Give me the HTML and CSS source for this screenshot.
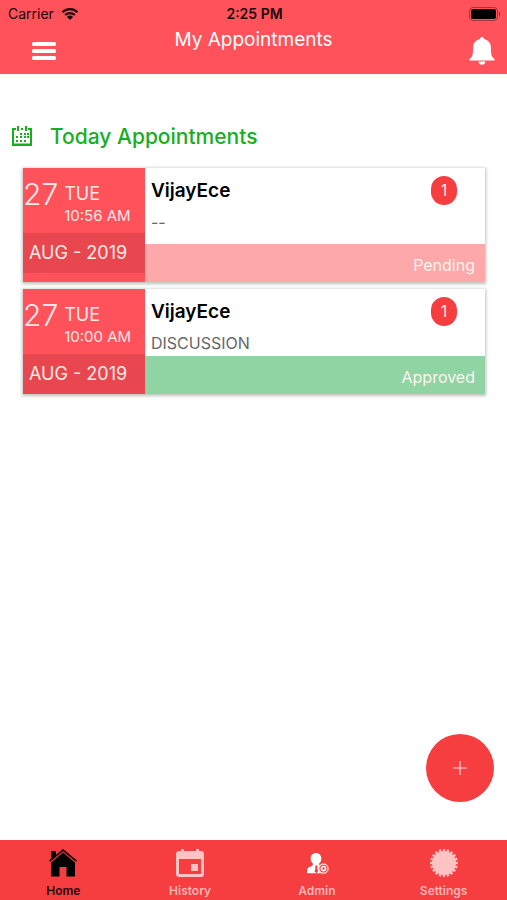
FILE: index.html
```html
<!DOCTYPE html>
<html lang="en">
<head>
  <meta charset="UTF-8">
  <meta name="viewport" content="width=device-width, initial-scale=1">
  <title>My Appointments</title>
  <link rel="stylesheet" href="styles.css">
</head>
<body>

  <header>
    <div class="status-bar">
      <div class="carrier">
        <span>Carrier</span>
        <svg width="18" height="14" viewBox="0 0 18 14">
          <path d="M1.5 5.2a10.8 10.8 0 0 1 15 0M4.2 8a7 7 0 0 1 9.6 0" fill="none" stroke="#1c0507" stroke-width="2.2"/>
          <path d="M5.9 9.9a4.6 4.6 0 0 1 6.2 0L9 13z" fill="#1c0507"/>
        </svg>
      </div>
      <div class="time">2:25 PM</div>
      <div class="battery">
        <svg width="32" height="14" viewBox="0 0 32 14">
          <rect x="0.5" y="0.5" width="28" height="13" rx="3.5" fill="none" stroke="#a8343c"/>
          <rect x="2" y="2" width="25" height="10" rx="2" fill="#000"/>
          <path d="M30 4.5q2 2.5 0 5z" fill="#7a262b"/>
        </svg>
      </div>
    </div>

    <div class="nav-bar">
      <button class="icon-btn menu" aria-label="Menu">
        <svg width="24" height="18" viewBox="0 0 24 18" fill="#fff">
          <rect width="24" height="4" rx="1.5"/>
          <rect y="7" width="24" height="4" rx="1.5"/>
          <rect y="14" width="24" height="4" rx="1.5"/>
        </svg>
      </button>
      <h1>My Appointments</h1>
      <button class="icon-btn bell" aria-label="Notifications">
        <svg width="26" height="30" viewBox="0 0 26 30" fill="#fff">
          <path d="M13 1c1.200 0 2 .8 2 2 4.600 1 7 4.500 7 9.500 0 6 .5 8.500 3.500 10.500v1.500H.5V23C3.500 21 4 18.500 4 12.500 4 7.500 6.400 4 11 3c0-1.200.8-2 2-2z"/>
          <path d="M9.500 25.500h7c-.3 2-1.600 3.300-3.500 3.300s-3.200-1.300-3.500-3.300z"/>
        </svg>
      </button>
    </div>
  </header>

  <main>
    <div class="section-title">
      <svg width="20" height="20" viewBox="0 0 20 20" fill="#17ae1f">
        <path d="M0 2h2v15.500h16V2h2v18H0zM2 2h2v2H2zM16 2h2v2h-2zM9 2h2v2H9z"/>
        <path d="M5 0h2v5H5zM13 0h2v5h-2z"/>
        <path d="M8 7h2v2H8zM12 7h2v2h-2zM15 7h2v2h-2zM4 10h2v2H4zM8 10h2v2H8zM12 10h2v2h-2zM15 10h2v2h-2zM4 14h2v2H4zM8 14h2v2H8zM12 14h2v2h-2z"/>
      </svg>
      <h2>Today Appointments</h2>
    </div>

    <div class="list">
      <div class="card">
        <div class="date">
          <div class="date-top">
            <div class="day">27</div>
            <div>
              <div class="weekday">TUE</div>
              <div class="hour">10:56 AM</div>
            </div>
          </div>
          <div class="month">AUG - 2019</div>
        </div>
        <div class="info">
          <div class="info-top tall">
            <div>
              <h3>VijayEce</h3>
              <p>--</p>
            </div>
            <span class="badge">1</span>
          </div>
          <div class="status pending">Pending</div>
        </div>
      </div>

      <div class="card">
        <div class="date">
          <div class="date-top">
            <div class="day">27</div>
            <div>
              <div class="weekday">TUE</div>
              <div class="hour">10:00 AM</div>
            </div>
          </div>
          <div class="month">AUG - 2019</div>
        </div>
        <div class="info">
          <div class="info-top">
            <div>
              <h3>VijayEce</h3>
              <p>DISCUSSION</p>
            </div>
            <span class="badge">1</span>
          </div>
          <div class="status approved">Approved</div>
        </div>
      </div>
    </div>
  </main>

  <button class="fab" aria-label="Add appointment">
    <svg width="14" height="14" viewBox="0 0 14 14">
      <path d="M7 0v14M0 7h14" stroke="#ffd9d9" stroke-width="1.2"/>
    </svg>
  </button>

  <nav class="tabs">
    <a href="#" class="active">
      <svg width="28" height="28" viewBox="0 0 28 28" fill="#000">
        <path d="M14 0L28 11.500l-1 1.300L14 2.200 1 12.800l-1-1.300 2-1.700V2h5v3.700z"/>
        <path d="M14 3.600L26 13.400V27.500h-8.500V18h-7v9.500H2V13.400z"/>
      </svg>
      <span>Home</span>
    </a>
    <a href="#">
      <svg width="28" height="28" viewBox="0 0 28 28" fill="#ffc3c3">
        <path fill-rule="evenodd" d="M5 0h3v2h12V0h3v2h2a3 3 0 0 1 3 3v20a3 3 0 0 1-3 3H3a3 3 0 0 1-3-3V5a3 3 0 0 1 3-3h2zM3 10v15h22V10z"/>
        <rect x="15" y="15" width="7" height="7"/>
      </svg>
      <span>History</span>
    </a>
    <a href="#">
      <svg width="28" height="28" viewBox="0 0 28 28" fill="#fff">
        <path d="M13 4c3.200 0 5.300 2.300 5.300 5.500 0 2.300-1 4.300-2.300 5.300 0 1.200.8 1.700 2.600 2.200L20 24.300H4c0-4 .5-5.800 3-6.600 2.200-.7 3-1.200 3-2.900-1.400-1-2.300-3-2.300-5.300C7.700 6.300 9.800 4 13 4z"/>
        <path d="M13.300 16l1.200 1.500-.4 1.500.9 3.500-1.700 1.700-1.700-1.700.9-3.500-.4-1.500z" fill="#f63d3f"/>
        <circle cx="20.500" cy="19.600" r="4.600" fill="#f63d3f" stroke="#ffd9d9" stroke-width="1.300"/>
        <circle cx="20.500" cy="19.600" r="2.100" fill="none" stroke="#fff" stroke-width="1.700"/>
      </svg>
      <span>Admin</span>
    </a>
    <a href="#">
      <svg width="28" height="28" viewBox="0 0 28 28">
        <circle cx="14" cy="14" r="12" fill="#ffc3c3"/>
        <circle cx="14" cy="14" r="12.800" fill="none" stroke="#ffc3c3" stroke-width="2.400" pathLength="40" stroke-dasharray="1.200 0.800" stroke-dashoffset="0.600"/>
      </svg>
      <span>Settings</span>
    </a>
  </nav>

</body>
</html>
```
FILE: styles.css
```css
* {
  box-sizing: border-box;
}

body {
  font-family: Inter, 'Liberation Sans', sans-serif;
  margin: 0;
  min-height: 100vh;
  display: flex;
  flex-direction: column;
  background: #fff;
}

h1, h2, h3, p {
  margin: 0;
}

button {
  border: none;
  padding: 0;
  cursor: pointer;
}

svg {
  display: block;
}

header {
  background: #ff525b;
  color: #fff;
}

.status-bar {
  display: flex;
  align-items: center;
  height: 27px;
  padding: 0 6px 0 8px;
  color: #1c0507;
  font-size: 14px;
}

.carrier, .battery {
  flex: 1;
  display: flex;
  align-items: center;
  gap: 7px;
}

.battery {
  justify-content: flex-end;
}

.time {
  font-weight: 600;
}

.nav-bar {
  display: flex;
  justify-content: space-between;
  height: 47px;
  padding: 0 12px;
}

.nav-bar h1 {
  font-size: 19px;
  font-weight: 400;
  line-height: 26px;
}

.icon-btn {
  background: none;
  display: flex;
  align-items: center;
  width: 46px;
}

.menu {
  padding-left: 20px;
}

.bell {
  justify-content: flex-end;
}

main {
  flex: 1;
  padding: 48px 22px 0 12px;
}

.section-title {
  display: flex;
  align-items: center;
  gap: 18px;
  height: 28px;
  color: #17ae1f;
}

.section-title h2 {
  font-size: 21px;
  font-weight: 500;
}

.list {
  display: flex;
  flex-direction: column;
  gap: 7px;
  padding: 18px 0 0 11px;
}

.card {
  display: flex;
  background: #fff;
  box-shadow: 0 1px 3px 1px rgba(0, 0, 0, 0.25);
}

.date {
  width: 122px;
  background: #ff525b;
  color: #ffe9e6;
}

.date-top {
  display: flex;
  gap: 6px;
  height: 65px;
  padding-top: 8px;
}

.day {
  font-size: 30px;
  font-weight: 300;
  line-height: 36px;
}

.weekday {
  font-size: 18px;
  line-height: 22px;
  padding-top: 7px;
}

.hour {
  font-size: 15px;
  line-height: 22px;
}

.month {
  height: 40px;
  padding-left: 6px;
  background: #e9474f;
  font-size: 18px;
  line-height: 40px;
}

.info {
  flex: 1;
}

.info-top {
  display: flex;
  justify-content: space-between;
  height: 67px;
  padding: 8px 28px 0 6px;
}

.tall {
  height: 76px;
}

.info h3 {
  color: #000;
  font-size: 19px;
  font-weight: 600;
  line-height: 29px;
}

.info p {
  padding-top: 7px;
  color: #666;
  font-size: 16px;
  line-height: 20px;
}

.badge {
  width: 26px;
  height: 29px;
  border-radius: 13px;
  background: #f63d3f;
  color: #ffe9e6;
  font-size: 16px;
  line-height: 29px;
  text-align: center;
}

.status {
  height: 38px;
  padding-right: 10px;
  color: #fff3f0;
  font-size: 16px;
  line-height: 42px;
  text-align: right;
}

.pending {
  background: #fda9a9;
}

.approved {
  background: #90d4a3;
}

.fab {
  position: fixed;
  right: 13px;
  bottom: 98px;
  width: 68px;
  height: 68px;
  border-radius: 50%;
  background: #f63d3f;
  display: flex;
  align-items: center;
  justify-content: center;
}

.tabs {
  display: flex;
  height: 60px;
  background: #f63d3f;
}

.tabs a {
  flex: 1;
  display: flex;
  flex-direction: column;
  align-items: center;
  gap: 5px;
  padding-top: 9px;
  color: #ffb5b5;
  font-size: 12px;
  font-weight: 600;
  line-height: 18px;
  text-decoration: none;
}

.tabs .active {
  color: #2a0808;
}
```
